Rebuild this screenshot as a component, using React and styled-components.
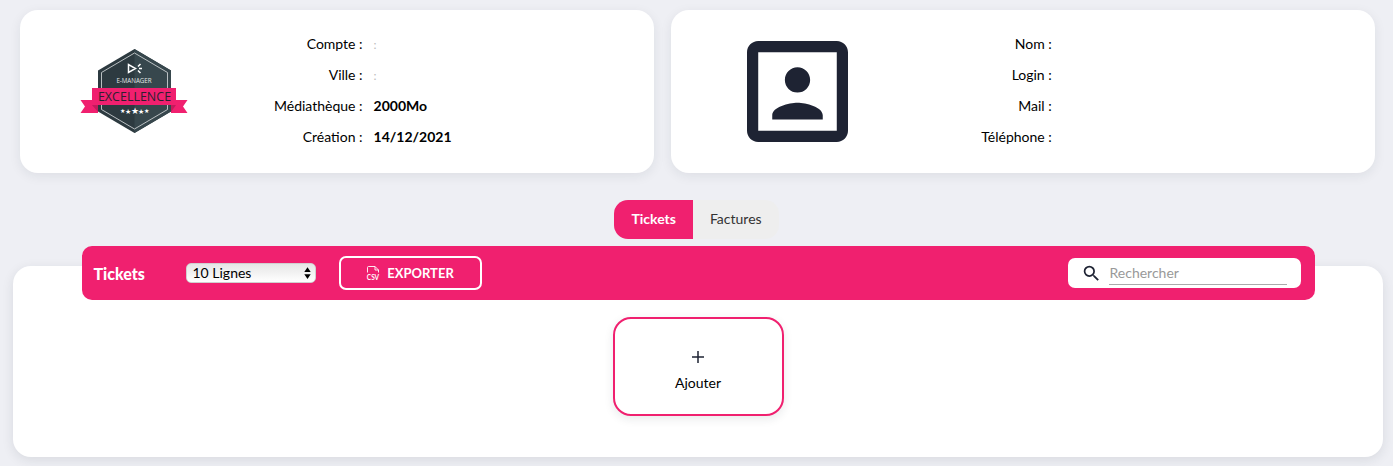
import React, { useState } from 'react';
import styled, { createGlobalStyle } from 'styled-components';

const PINK = '#f0206f';
const NAVY = '#1e2333';

const GlobalStyle = createGlobalStyle`
  * {
    box-sizing: border-box;
  }

  body {
    margin: 0;
    background: #eeeff4;
    color: #000;
    font-family: Lato, 'Open Sans', sans-serif;
    font-size: 14px;
  }

  button,
  input,
  select {
    font-family: inherit;
    font-size: inherit;
  }
`;

const Cards = styled.section`
  display: grid;
  grid-template-columns: 9fr 10fr;
  gap: 17px;
  padding: 10px 18px 0 20px;
`;

const Card = styled.article`
  display: grid;
  grid-template-columns: 36fr 64fr;
  align-items: center;
  padding: 18px 0 19px;
  background: #fff;
  border-radius: 18px;
  box-shadow: 0 3px 12px rgba(30, 35, 51, 0.08);
`;

const CardVisual = styled.div`
  display: flex;
  justify-content: center;
`;

const InfoList = styled.dl`
  margin: 0;
  padding-bottom: 2px;
`;

const InfoRow = styled.div`
  display: grid;
  grid-template-columns: 29fr 71fr;
  gap: 11px;
  height: 31px;
  line-height: 31px;
`;

const InfoLabel = styled.dt`
  text-align: right;
  white-space: nowrap;
`;

const InfoValue = styled.dd`
  margin: 0;
  font-weight: 700;
`;

const Masked = styled.span`
  color: #bbb;
  font-size: 12px;
  font-weight: 400;
`;

const Tabs = styled.nav`
  display: flex;
  justify-content: center;
  margin-top: 27px;
`;

const Tab = styled.button`
  height: 39px;
  padding: 0 17px 2px;
  border: none;
  cursor: pointer;
  background: ${({ $active }) => ($active ? PINK : '#eeeeee')};
  color: ${({ $active }) => ($active ? '#fff' : '#333')};
  font-weight: ${({ $active }) => ($active ? 700 : 400)};

  &:first-child {
    border-radius: 14px 0 0 14px;
  }

  &:last-child {
    border-radius: 0 14px 14px 0;
  }
`;

const Panel = styled.section`
  display: flow-root;
  margin: 27px 10px 9px 13px;
  padding-bottom: 41px;
  background: #fff;
  border-radius: 18px;
  box-shadow: 0 3px 12px rgba(30, 35, 51, 0.1);
`;

const Toolbar = styled.header`
  display: flex;
  align-items: center;
  width: 90%;
  height: 54px;
  margin: -20px auto 17px;
  padding: 0 14px 0 12px;
  background: ${PINK};
  border-radius: 10px;
`;

const Title = styled.h1`
  width: 92px;
  margin: 0;
  color: #fff;
  font-size: 16px;
  font-weight: 900;
`;

const SelectBox = styled.div`
  position: relative;
  display: flex;
  width: 130px;
  margin-right: 23px;

  svg {
    position: absolute;
    top: 4px;
    right: 5px;
    pointer-events: none;
  }
`;

const Select = styled.select`
  appearance: none;
  width: 100%;
  height: 20px;
  padding: 0 6px 2px;
  border: 1px solid #d0d0d0;
  border-radius: 5px;
  background: linear-gradient(#e6e6e6, #fff);
  color: #000;
`;

const ExportButton = styled.button`
  display: flex;
  align-items: center;
  justify-content: center;
  gap: 7px;
  width: 143px;
  height: 34px;
  border: 2px solid #fff;
  border-radius: 7px;
  background: transparent;
  color: #fff;
  font-size: 13px;
  font-weight: 700;
  cursor: pointer;
`;

const Search = styled.label`
  display: flex;
  align-items: center;
  gap: 8px;
  width: 233px;
  height: 30px;
  margin-left: auto;
  padding: 0 14px;
  background: #fff;
  border-radius: 7px;
`;

const SearchInput = styled.input`
  flex: 1;
  min-width: 0;
  height: 24px;
  padding: 0 1px;
  border: none;
  border-bottom: 1px solid #aaa;
  outline: none;
  background: transparent;

  &::placeholder {
    color: #999;
  }
`;

const AddButton = styled.button`
  display: flex;
  flex-direction: column;
  align-items: center;
  justify-content: center;
  gap: 10px;
  width: 171px;
  height: 99px;
  margin: 0 auto;
  padding-top: 8px;
  border: 2px solid ${PINK};
  border-radius: 18px;
  background: #fff;
  color: #000;
  box-shadow: 0 3px 10px rgba(30, 35, 51, 0.1);
  cursor: pointer;
`;

const ExcellenceBadge = () => (
  <svg width="108" height="84" viewBox="0 0 108 84" fontFamily="Open Sans, sans-serif" textAnchor="middle">
    <path d="M54.500 0L91 21.500v41L54.500 84 18 62.500v-41z" fill="#2d3a40" />
    <path d="M54.500 0L91 21.500v41L54.500 84z" fill="#37474d" />
    <path d="M54.500 4l33 19.500v37L54.500 80l-33-19.500v-37z" fill="none" stroke="#c9ced0" strokeWidth="0.900" />
    <path d="M.5 51H18v13H.5L5 57.500z" fill={PINK} />
    <path d="M107.500 51H91v13h16.500L103 57.500z" fill={PINK} />
    <path d="M12 56h6v7z M96 56h-5v7z" fill="#c41a5c" />
    <path d="M12 39h84v17H12z" fill={PINK} />
    <path d="M48.500 15.500v8l7-4z M58 17.500l2.500-2.500 M59 19.500h3 M58 21.500l2.500 2.500" fill="none" stroke="#fff" strokeWidth="1.500" />
    <text x="54" y="34" fill="#e4e7e8" fontSize="6.200">E-MANAGER</text>
    <text x="54.500" y="52" fill="#2b2030" fontSize="12.500">EXCELLENCE</text>
    <g fill="#fff">
      <text x="42.500" y="64" fontSize="6">★</text>
      <text x="48" y="64.500" fontSize="7">★</text>
      <text x="54.500" y="65" fontSize="9">★</text>
      <text x="61" y="64.500" fontSize="7">★</text>
      <text x="66.500" y="64" fontSize="6">★</text>
    </g>
  </svg>
);

const ContactIcon = () => (
  <svg width="101" height="101" viewBox="3 3 18 18" fill={NAVY}>
    <path d="M19 5v14H5V5h14m0-2H5c-1.100 0-2 .9-2 2v14c0 1.100.9 2 2 2h14c1.100 0 2-.9 2-2V5c0-1.100-.9-2-2-2z" />
    <path d="M12 12.200c1.240 0 2.250-1.010 2.250-2.250S13.240 7.700 12 7.700 9.750 8.710 9.750 9.950 10.760 12.200 12 12.200zM16.500 17v-.75c0-1.500-3-2.250-4.500-2.250s-4.500.75-4.500 2.250V17h9z" />
  </svg>
);

const CsvIcon = () => (
  <svg width="14" height="14" viewBox="0 0 14 14" fill="none" stroke="#fff">
    <path d="M1.500 6.500v-5q0-1 1-1H9l3.500 3.500v2.500M9 .5V4h3.500" strokeWidth="0.900" />
    <text x="7" y="13.500" fill="#fff" stroke="none" fontSize="6.500" fontWeight="700" textAnchor="middle">CSV</text>
  </svg>
);

const SearchIcon = () => (
  <svg width="19" height="19" viewBox="1 1 22 22" fill={NAVY}>
    <path d="M15.500 14h-.79l-.28-.27A6.471 6.471 0 0 0 16 9.500 6.500 6.500 0 1 0 9.500 16c1.610 0 3.090-.59 4.230-1.570l.27.28v.79l5 4.990L20.490 19l-4.990-5zm-6 0C7.010 14 5 11.990 5 9.500S7.010 5 9.500 5 14 7.010 14 9.500 11.990 14 9.500 14z" />
  </svg>
);

const PlusIcon = () => (
  <svg width="14" height="14" viewBox="0 0 14 14" stroke={NAVY} strokeWidth="1.500">
    <path d="M7 1v12M1 7h12" />
  </svg>
);

const Arrows = () => (
  <svg width="7" height="12" viewBox="0 0 7 12">
    <path d="M.3 5l3.200-4.700L6.700 5zM.3 7.300L3.500 12l3.200-4.700z" />
  </svg>
);

const account = [
  ['Compte', <Masked>:</Masked>],
  ['Ville', <Masked>:</Masked>],
  ['Médiathèque', '2000Mo'],
  ['Création', '14/12/2021'],
];

const contact = [
  ['Nom', ''],
  ['Login', ''],
  ['Mail', ''],
  ['Téléphone', ''],
];

function InfoCard({ visual, rows }) {
  return (
    <Card>
      <CardVisual>{visual}</CardVisual>
      <InfoList>
        {rows.map(([label, value]) => (
          <InfoRow key={label}>
            <InfoLabel>{label} :</InfoLabel>
            <InfoValue>{value}</InfoValue>
          </InfoRow>
        ))}
      </InfoList>
    </Card>
  );
}

function App() {
  const [tab, setTab] = useState('Tickets');

  return (
    <>
      <GlobalStyle />
      <Cards>
        <InfoCard visual={<ExcellenceBadge />} rows={account} />
        <InfoCard visual={<ContactIcon />} rows={contact} />
      </Cards>
      <Tabs>
        {['Tickets', 'Factures'].map((name) => (
          <Tab key={name} $active={tab === name} onClick={() => setTab(name)}>
            {name}
          </Tab>
        ))}
      </Tabs>
      <Panel>
        <Toolbar>
          <Title>{tab}</Title>
          <SelectBox>
            <Select aria-label="Nombre de lignes" defaultValue="10">
              <option value="10">10 Lignes</option>
              <option value="25">25 Lignes</option>
              <option value="50">50 Lignes</option>
            </Select>
            <Arrows />
          </SelectBox>
          <ExportButton>
            <CsvIcon />
            EXPORTER
          </ExportButton>
          <Search>
            <SearchIcon />
            <SearchInput type="text" placeholder="Rechercher" aria-label="Rechercher" />
          </Search>
        </Toolbar>
        <AddButton>
          <PlusIcon />
          Ajouter
        </AddButton>
      </Panel>
    </>
  );
}

export default App;
